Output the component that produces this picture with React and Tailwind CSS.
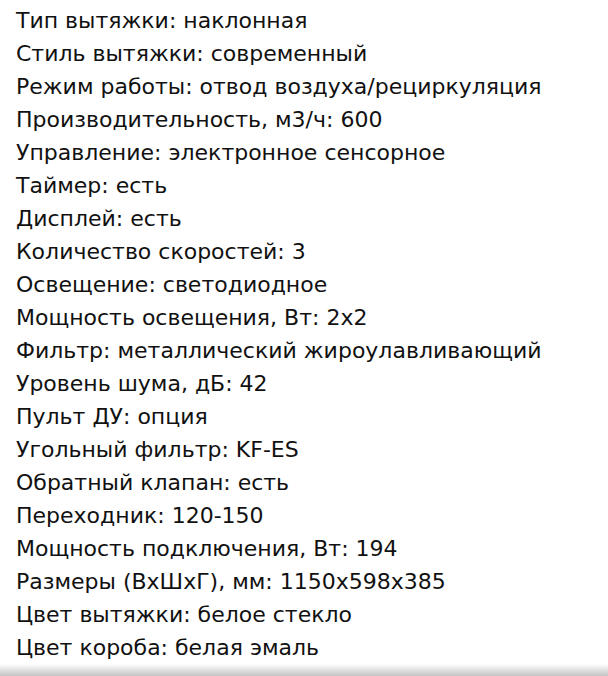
export default function App() {
  const lines = [
    "Тип вытяжки: наклонная",
    "Стиль вытяжки: современный",
    "Режим работы: отвод воздуха/рециркуляция",
    "Производительность, м3/ч: 600",
    "Управление: электронное сенсорное",
    "Таймер: есть",
    "Дисплей: есть",
    "Количество скоростей: 3",
    "Освещение: светодиодное",
    "Мощность освещения, Вт: 2x2",
    "Фильтр: металлический жироулавливающий",
    "Уровень шума, дБ: 42",
    "Пульт ДУ: опция",
    "Угольный фильтр: KF-ES",
    "Обратный клапан: есть",
    "Переходник: 120-150",
    "Мощность подключения, Вт: 194",
    "Размеры (ВхШхГ), мм: 1150x598x385",
    "Цвет вытяжки: белое стекло",
    "Цвет короба: белая эмаль",
  ];
  return (
    <div className="w-[608px] h-[676px] bg-white flex flex-col overflow-hidden">
      <div className="pl-[16px] pt-[4px] flex flex-col text-[22px] leading-[33px] text-[#111] font-['DejaVu_Sans',sans-serif]">
        {lines.map((l, i) => (
          <div key={i} className="whitespace-nowrap">{l}</div>
        ))}
      </div>
      <div className="mt-auto h-[21px] bg-gradient-to-b from-white to-[#c4c4c4]" />
    </div>
  );
}
